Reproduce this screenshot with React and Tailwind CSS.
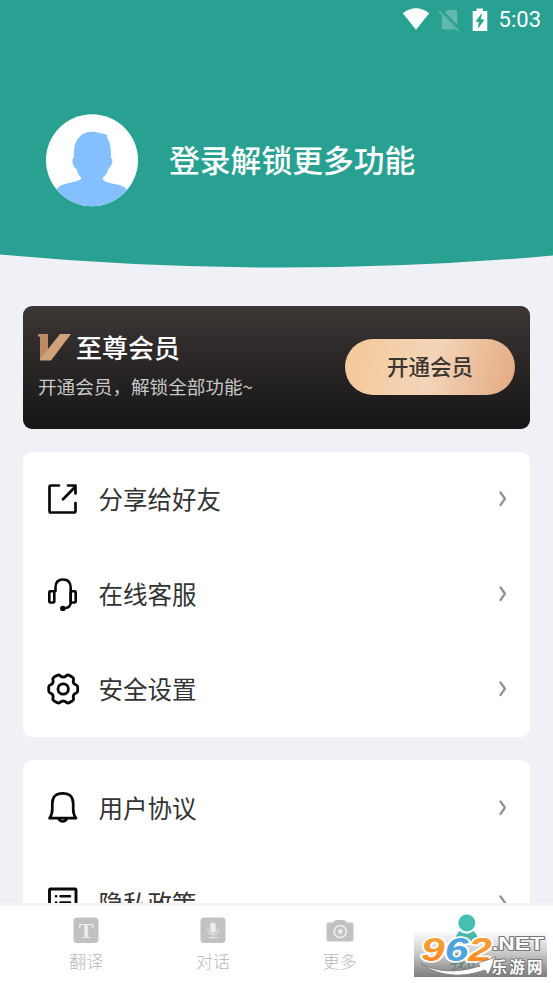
import React from "react";

const cjk = "font-['Noto_Sans_CJK_SC',sans-serif]";

function StatusBar() {
  return (
    <div className="flex h-[39px] items-center justify-end pr-3">
      <svg className="h-[23px] w-[28px]" viewBox="0 0 28 23">
        <path d="M0.8 5.2Q14 -4.5 27.2 5.2L14 21.8Z" fill="#fff" />
      </svg>
      <svg className="ml-2 h-[24px] w-[22px]" viewBox="0 0 22 24">
        <path d="M9.5 2H17.5Q19.3 2 19.3 4V17L7 4.5ZM4 7.5L17.5 21.5H5.5Q3.6 21.5 3.6 19.5Z" fill="#62b8ad" />
        <path d="M1 3.2L20.5 22.8" stroke="#62b8ad" strokeWidth="1.8" />
      </svg>
      <svg className="ml-3 h-[24px] w-[16px]" viewBox="0 0 16 24">
        <path d="M4.5 0.5H11V3H15.3V23H0.7V3H4.5Z" fill="#fff" />
        <path d="M9.5 6L4 13.6H7.2L6.2 20L12 11.8H8.6Z" fill="#28a192" stroke="#28a192" strokeWidth="0.6" />
      </svg>
      <span className="ml-[11px] font-['Roboto',sans-serif] text-[22px] leading-none text-white">5:03</span>
    </div>
  );
}

function Avatar() {
  return (
    <svg className="h-[93px] w-[93px]" viewBox="0 0 93 93">
      <defs>
        <clipPath id="avatar"><circle cx="46" cy="46.2" r="46" /></clipPath>
      </defs>
      <circle cx="46" cy="46.2" r="46" fill="#fff" />
      <path
        clipPath="url(#avatar)"
        d="M28 43C27 30 31 25 36 20.5C42 16.5 50 17.500 55 19.300C58 20 61 20.300 61.500 21.500L60.800 23.500C64.500 28 65 34 65 44C68 45 65.500 53 62.500 54.500C61.500 59 59 62 56.500 64C57 68 64 69 71 70.500C78 72 80.500 74 82 78V93H10V78C11 72 16 70.500 23 69C29 67.500 34.500 67 35.500 64C33 62 31.500 59 30.500 55C26.500 53 25 45 28 43Z"
        fill="#84bfff"
      />
    </svg>
  );
}

const line = { fill: "none", stroke: "#080808", strokeWidth: 2.9, strokeLinecap: "round", strokeLinejoin: "round" };

const icons = {
  share: (
    <g {...line} strokeWidth={2.7}>
      <path d="M12 2.500H4Q2.500 2.500 2.500 4V28Q2.500 29.500 4 29.500H26.500Q28.500 29.500 28.500 28V20M16 16.300L28 4M21 2.500H28.500V10.500" />
    </g>
  ),
  service: (
    <g {...line} strokeWidth={2.6}>
      <path d="M8.500 13V9.500Q8.500 1.500 16 1.500T23.700 9.500V24.500Q23.700 30 16.500 30.300" />
      <rect x="2.300" y="13.300" width="5" height="11.200" rx="1" />
      <rect x="23.700" y="13.300" width="5" height="11.200" rx="1" />
      <circle cx="15.800" cy="30.500" r="1.500" fill="#080808" />
    </g>
  ),
  settings: (
    <g {...line} strokeWidth={2.8}>
      <path d="M10.300 2.300Q12 1.600 13.200 2.800Q16.200 5.300 19.200 2.800Q20.400 1.600 22.100 2.300L25.600 4.300Q27 5.300 26.400 7Q25.600 10.800 29.200 12Q30.700 12.500 30.700 14.300V17.700Q30.700 19.500 29.200 20Q25.600 21.200 26.400 25Q27 26.700 25.600 27.700L22.100 29.700Q20.400 30.400 19.200 29.200Q16.200 26.700 13.200 29.200Q12 30.400 10.300 29.700L6.800 27.700Q5.400 26.700 6 25Q6.800 21.200 3.200 20Q1.700 19.500 1.700 17.700V14.300Q1.700 12.500 3.200 12Q6.800 10.800 6 7Q5.400 5.300 6.800 4.300Z" />
      <circle cx="16.200" cy="16" r="5.200" />
    </g>
  ),
  bell: (
    <g {...line} strokeWidth={2.7}>
      <path d="M2.500 27.200H29Q26.200 23.500 26.200 18V12.500Q26.200 2.300 15.700 2.300T5.300 12.500V18Q5.300 23.500 2.500 27.200ZM12 28.500Q15.700 32.500 19.500 28.500" />
    </g>
  ),
  policy: (
    <g {...line}>
      <rect x="2.500" y="3" width="26.500" height="27" rx="1" />
      <path strokeWidth="2.500" d="M9 10.200H9.200M13.500 10.200H23M9 16.500H9.200M13.500 16.500H23M9 22.800H9.200M13.500 22.800H23" />
    </g>
  ),
};

function MenuRow({ icon, label }) {
  return (
    <div className="flex h-[95.200px] shrink-0 items-center pl-6 pr-[21px]">
      <svg className="h-[33px] w-[33px] shrink-0" viewBox="0 0 33 33">{icons[icon]}</svg>
      <span className="ml-[18.500px] text-[24.500px] leading-9 text-[#333]">{label}</span>
      <svg className="ml-auto h-[18px] w-[12px]" viewBox="0 0 12 18">
        <path d="M3.500 2.500L8 8.700L3.500 15" fill="none" stroke="#929292" strokeWidth="2.300" strokeLinecap="round" strokeLinejoin="round" />
      </svg>
    </div>
  );
}

function NavItem({ label, active, children }) {
  return (
    <div className="flex w-[126.700px] flex-col items-center pt-[10px]">
      <svg className="h-[28px] w-[30px] overflow-visible" viewBox="0 0 30 28">{children}</svg>
      <span className={active ? "mt-[5px] text-[17px] leading-6 text-[#28a192]" : "mt-[5px] text-[17px] font-light leading-6 text-[#b9b9b9]"}>{label}</span>
    </div>
  );
}

function Watermark() {
  return (
    <svg className="absolute left-[414px] top-[925px] h-[52px] w-[133px]" viewBox="0 0 133 52">
      <defs>
        <linearGradient id="shade" x1="0" y1="0" x2="0" y2="1">
          <stop offset="0.100" stopColor="#777" stopOpacity="0" />
          <stop offset="0.500" stopColor="#777" stopOpacity="0.350" />
          <stop offset="1" stopColor="#777" stopOpacity="0.950" />
        </linearGradient>
        <linearGradient id="orange" x1="0" y1="0" x2="0" y2="1">
          <stop offset="0.200" stopColor="#f5a03c" />
          <stop offset="1" stopColor="#ff8412" />
        </linearGradient>
      </defs>
      <rect width="133" height="52" fill="url(#shade)" />
      <g fontFamily="'Liberation Sans', sans-serif" fontWeight="700" fontStyle="italic" fontSize="33.500" strokeWidth="3.500" strokeLinejoin="round">
        <text x="7" y="36" textLength="71" lengthAdjust="spacingAndGlyphs" stroke="#fff" paintOrder="stroke">
          <tspan fill="url(#orange)">9</tspan>
          <tspan fill="#4fa3df">6</tspan>
          <tspan fill="url(#orange)">2</tspan>
        </text>
      </g>
      <path d="M7 38.500Q31 52 66 41L64 38L82 32L74 50L71 45Q34 58 7 38.500Z" fill="#fff" stroke="#777" strokeWidth="0.800" />
      <g fill="#fff" stroke="#777" strokeWidth="2" strokeLinejoin="round" paintOrder="stroke">
        <text x="78" y="24.500" fontFamily="'Liberation Sans', sans-serif" fontWeight="700" fontSize="18" textLength="52" lengthAdjust="spacingAndGlyphs">.NET</text>
        <text x="77.500" y="48" fontFamily="'Noto Sans CJK SC', sans-serif" fontWeight="700" fontSize="15.500" textLength="51" lengthAdjust="spacing">乐游网</text>
      </g>
    </svg>
  );
}

export default function App() {
  return (
    <div className={`relative flex h-[983px] w-[553px] flex-col overflow-hidden bg-[#f0f1f7] ${cjk}`}>
      <header className="h-[254px] shrink-0 bg-[#28a192]">
        <StatusBar />
        <div className="flex items-center pl-[46px] pt-[74.500px]">
          <Avatar />
          <h1 className="ml-[30px] pb-[3px] text-[30.800px] font-medium leading-[46px] text-white">登录解锁更多功能</h1>
        </div>
      </header>
      <svg className="h-[14px] w-[553px] shrink-0" viewBox="0 0 553 14">
        <path d="M0 0H553V1.500Q418 13.500 280 13.500T0 0.500Z" fill="#28a192" />
      </svg>

      <main className="flex min-h-0 flex-1 flex-col overflow-hidden px-[23px] pt-[38px]">
        <section className="flex h-[122.500px] shrink-0 items-center justify-between rounded-[9px] bg-gradient-to-b from-[#3d3635] to-[#161616] px-[15px]">
          <div className="pb-[6px]">
            <div className="flex items-center">
              <svg className="h-[28px] w-[33px]" viewBox="0 0 33 28">
                <path d="M0 1H10V19L2 27.500V4L0 3Z" fill="#bd8a66" />
                <path d="M22 1H33L13 27.500H2V26Z" fill="#d0a27a" />
              </svg>
              <span className="ml-[5px] text-[26px] font-medium leading-[38px] text-white">至尊会员</span>
            </div>
            <p className="mt-[6px] text-[18.600px] leading-7 text-[#c9c8c8]">开通会员，解锁全部功能~</p>
          </div>
          <button className="h-[56px] w-[170px] rounded-full bg-[linear-gradient(105deg,#f3ca9c_10%,#f4d5b9_50%,#e5ae86_95%)] pb-[2px] text-[21.500px] font-medium text-[#3b3632]">开通会员</button>
        </section>

        <section className="mt-[23px] shrink-0 rounded-[9px] bg-white">
          <MenuRow icon="share" label="分享给好友" />
          <MenuRow icon="service" label="在线客服" />
          <MenuRow icon="settings" label="安全设置" />
        </section>

        <section className="mt-[23px] shrink-0 rounded-t-[9px] bg-white">
          <MenuRow icon="bell" label="用户协议" />
          <MenuRow icon="policy" label="隐私政策" />
        </section>
      </main>

      <nav className="flex h-[80px] shrink-0 border-t-[3px] border-[#f4f4f8] bg-white pl-[23px]">
        <NavItem label="翻译">
          <rect x="2.500" y="1.500" width="25" height="25.500" rx="3.500" fill="#c2c2c2" />
          <text x="15" y="21.500" textAnchor="middle" fontFamily="'Liberation Serif', serif" fontWeight="700" fontSize="22" fill="#eee">T</text>
        </NavItem>
        <NavItem label="对话">
          <rect x="2.500" y="1.500" width="25" height="25.500" rx="3.500" fill="#c2c2c2" />
          <rect x="12.300" y="6.500" width="5.400" height="10.500" rx="2.700" fill="#eee" />
          <path d="M10 12.500V14Q10 18.500 15 18.500T20 14V12.500M15 18.500V21.500M10.500 21.700H19.500" fill="none" stroke="#e4e4e4" strokeWidth="1.200" />
        </NavItem>
        <NavItem label="更多">
          <path d="M3.500 6.500H8L10 4.500Q10.500 4 11.500 4H18.500Q19.500 4 20 4.500L22 6.500H26.500Q28.500 6.500 28.500 8.500V23.500Q28.500 25.500 26.500 25.500H3.500Q1.500 25.500 1.500 23.500V8.500Q1.500 6.500 3.500 6.500Z" fill="#c2c2c2" />
          <circle cx="15.300" cy="15.500" r="6" fill="none" stroke="#eee" strokeWidth="1.700" />
          <circle cx="15.300" cy="15.500" r="2.400" fill="#eee" />
        </NavItem>
        <NavItem label="我的" active>
          <circle cx="15.800" cy="7" r="8.500" fill="#46bfb2" />
          <path d="M3.500 28Q4 19 8.500 15Q15.300 20.500 22.500 15Q27.500 19 28 28Z" fill="#46bfb2" />
        </NavItem>
      </nav>
      <Watermark />
    </div>
  );
}
